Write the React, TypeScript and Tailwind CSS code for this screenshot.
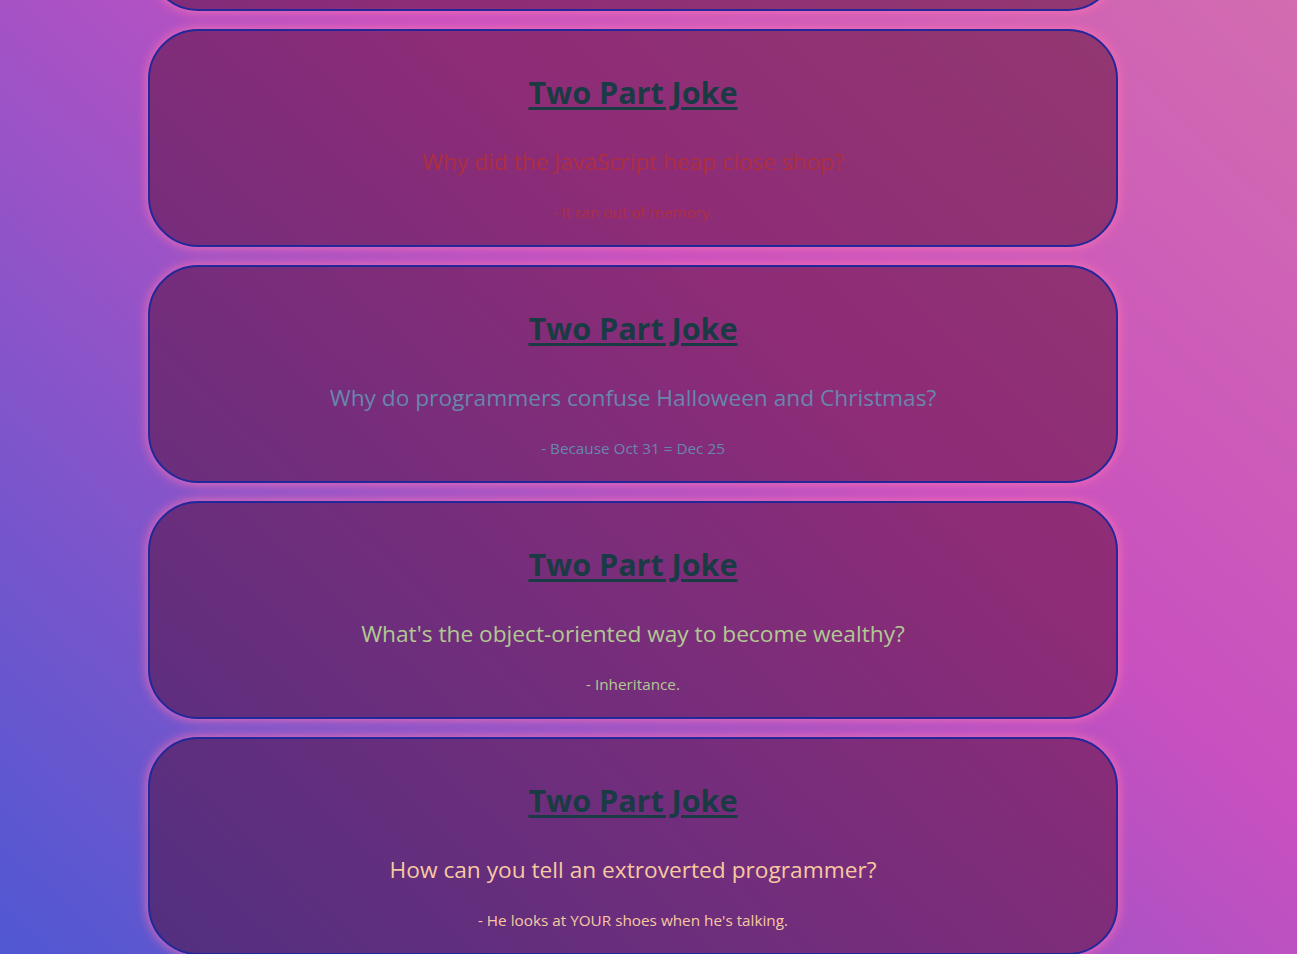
import React from 'react'

type Joke = { setup: string; delivery: string; color: string }

const JOKES: Joke[] = [
  { setup: 'Why did the JavaScript heap close shop?', delivery: '- It ran out of memory.', color: 'text-[#ad2f3e]' },
  { setup: 'Why do programmers confuse Halloween and Christmas?', delivery: '- Because Oct 31 = Dec 25', color: 'text-[#6886ae]' },
  { setup: "What's the object-oriented way to become wealthy?", delivery: '- Inheritance.', color: 'text-[#b2c992]' },
  { setup: 'How can you tell an extroverted programmer?', delivery: "- He looks at YOUR shoes when he's talking.", color: 'text-[#f6caa0]' }
]

const CARD =
  'flex h-[218px] w-[970px] shrink-0 flex-col items-center rounded-[50px] border-2 border-[#22289a] bg-[rgba(70,0,30,0.45)] shadow-[0_0_12px_#ff70b0]'

function JokeCard({ joke }: { joke: Joke }): JSX.Element {
  return (
    <div className={`${CARD} pt-[41px]`}>
      <h1 className="text-[30.5px] font-bold leading-[40px] text-[#1a3a44] underline decoration-[2.5px] underline-offset-[3px]">
        Two Part Joke
      </h1>
      <p className={`mt-[34px] text-[22.7px] leading-[32px] ${joke.color}`}>{joke.setup}</p>
      <p className={`mt-[22px] text-[15.3px] leading-[24px] ${joke.color}`}>{joke.delivery}</p>
    </div>
  )
}

export default function App(): JSX.Element {
  return (
    <div
      className="h-screen overflow-hidden bg-[linear-gradient(43deg,#4f58d2_0%,#c850c0_62%,#d36cb0_100%)]"
      style={{ fontFamily: '"Open Sans", "Noto Sans", sans-serif' }}
    >
      {/* list is scrolled: the card above only shows its bottom edge */}
      <div className="-mt-[207px] flex flex-col gap-[18px] pl-[148px]">
        <div className={CARD} />
        {JOKES.map((joke, i) => (
          <JokeCard key={i} joke={joke} />
        ))}
      </div>
    </div>
  )
}
